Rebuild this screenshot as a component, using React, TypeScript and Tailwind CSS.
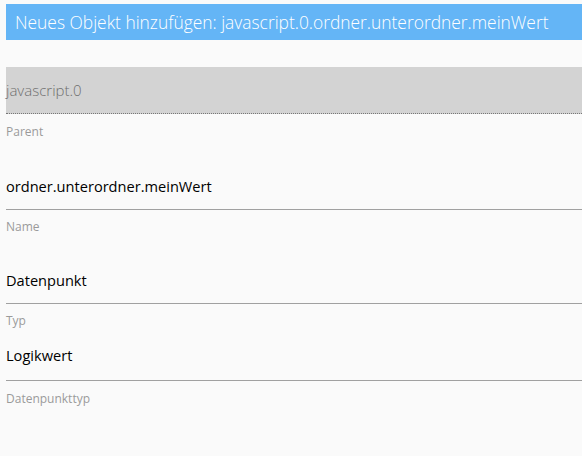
export default function App() {
  const font = { fontFamily: "'Open Sans', Roboto, sans-serif" };
  return (
    <div className="w-[582px] h-[456px] bg-[#fafafa] pl-[6px] pt-[4px] overflow-hidden" style={font}>
      <div className="h-[36px] bg-[#64b5f6] pl-[9px] flex items-center text-white text-[17.4px] font-light whitespace-nowrap">
        Neues Objekt hinzufügen: javascript.0.ordner.unterordner.meinWert
      </div>
      <div className="mt-[27px] h-[47px] bg-[#d3d3d3] border-b border-dotted border-[#777] flex items-center text-[15px] font-light text-[#6f6f6f]">
        javascript.0
      </div>
      <div className="pt-[10px] pb-[13px] border-b border-[#a0a0a0]">
        <div className="text-[12px] leading-[16px] text-[#9a9a9a]">Parent</div>
        <div className="mt-[36px] text-[14.6px] leading-[20px] text-black">ordner.unterordner.meinWert</div>
      </div>
      <div className="pt-[9px] pb-[13px] border-b border-[#a0a0a0]">
        <div className="text-[12px] leading-[16px] text-[#9a9a9a]">Name</div>
        <div className="mt-[35px] text-[14.6px] leading-[20px] text-black">Datenpunkt</div>
      </div>
      <div className="pt-[9px] pb-[15px] border-b border-[#a0a0a0]">
        <div className="text-[12px] leading-[16px] text-[#9a9a9a]">Typ</div>
        <div className="mt-[16px] text-[14.6px] leading-[20px] text-black">Logikwert</div>
      </div>
      <div className="pt-[10px]">
        <div className="text-[12px] leading-[16px] text-[#9a9a9a]">Datenpunkttyp</div>
      </div>
    </div>
  );
}
